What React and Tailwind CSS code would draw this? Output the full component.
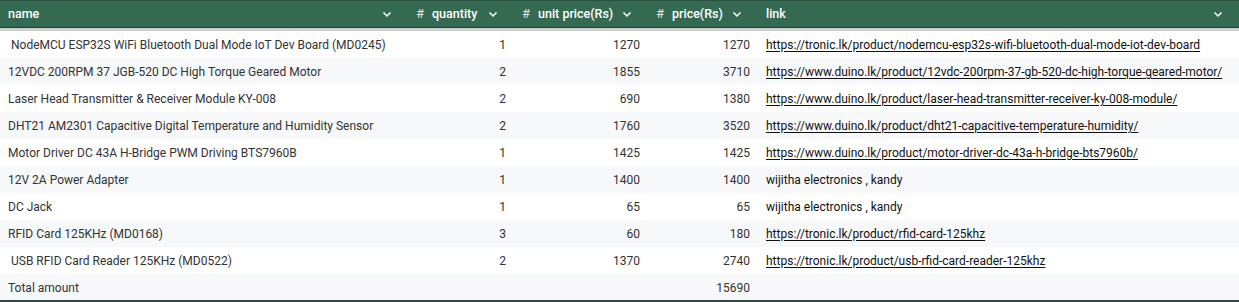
import React from 'react';

const rows = [
  { name: ' NodeMCU ESP32S WiFi Bluetooth Dual Mode IoT Dev Board (MD0245)', qty: 1, unit: 1270, price: 1270, link: 'https://tronic.lk/product/nodemcu-esp32s-wifi-bluetooth-dual-mode-iot-dev-board', url: true },
  { name: '12VDC 200RPM 37 JGB-520 DC High Torque Geared Motor', qty: 2, unit: 1855, price: 3710, link: 'https://www.duino.lk/product/12vdc-200rpm-37-gb-520-dc-high-torque-geared-motor/', url: true },
  { name: 'Laser Head Transmitter & Receiver Module KY-008', qty: 2, unit: 690, price: 1380, link: 'https://www.duino.lk/product/laser-head-transmitter-receiver-ky-008-module/', url: true },
  { name: 'DHT21 AM2301 Capacitive Digital Temperature and Humidity Sensor', qty: 2, unit: 1760, price: 3520, link: 'https://www.duino.lk/product/dht21-capacitive-temperature-humidity/', url: true },
  { name: 'Motor Driver DC 43A H-Bridge PWM Driving BTS7960B', qty: 1, unit: 1425, price: 1425, link: 'https://www.duino.lk/product/motor-driver-dc-43a-h-bridge-bts7960b/', url: true },
  { name: '12V 2A Power Adapter', qty: 1, unit: 1400, price: 1400, link: 'wijitha electronics , kandy', url: false },
  { name: 'DC Jack', qty: 1, unit: 65, price: 65, link: 'wijitha electronics , kandy', url: false },
  { name: 'RFID Card 125KHz (MD0168)', qty: 3, unit: 60, price: 180, link: 'https://tronic.lk/product/rfid-card-125khz', url: true },
  { name: ' USB RFID Card Reader 125KHz (MD0522)', qty: 2, unit: 1370, price: 2740, link: 'https://tronic.lk/product/usb-rfid-card-reader-125khz', url: true },
];

const grid = 'grid grid-cols-[408px_106px_134px_110px_1fr]';

function Chevron() {
  return (
    <svg width="10" height="10" viewBox="0 0 10 10" fill="none" stroke="white" strokeWidth="1.5" className="shrink-0">
      <path d="M1.5 3.5 L5 7 L8.5 3.5" />
    </svg>
  );
}

function HeadCell({ label, numeric }) {
  return (
    <div className="flex items-center px-2 gap-2">
      {numeric && <span className="text-[13px] font-normal text-[#dfe9e4]">#</span>}
      <span className="flex-1 whitespace-nowrap">{label}</span>
      <span className="pr-2"><Chevron /></span>
    </div>
  );
}

export default function App() {
  return (
    <div className="w-[1239px] h-[302px] overflow-hidden bg-white text-[12px] text-[#333] [font-family:Roboto,'Liberation_Sans',sans-serif]">
      <div className={`${grid} h-[28px] bg-[#356a52] text-white text-[12.5px] font-medium border-t border-[#2a5240] border-b border-b-[#1f3d30]`}>
        <HeadCell label="name" />
        <HeadCell label="quantity" numeric />
        <HeadCell label="unit price(Rs)" numeric />
        <HeadCell label="price(Rs)" numeric />
        <HeadCell label="link" />
      </div>
      <div className="h-[3px] bg-[#cdcdcd]" />
      {rows.map((r, i) => (
        <div key={i} className={`${grid} h-[27px] items-center ${i % 2 ? 'bg-[#f7f8fa]' : 'bg-white'}`}>
          <div className="px-2 whitespace-pre">{r.name}</div>
          <div className="px-2 text-right">{r.qty}</div>
          <div className="px-2 text-right">{r.unit}</div>
          <div className="px-2 text-right">{r.price}</div>
          <div className={`px-2 whitespace-nowrap text-[#111] ${r.url ? 'underline underline-offset-2' : ''}`}>{r.link}</div>
        </div>
      ))}
      <div className={`${grid} h-[28px] pt-px items-center bg-[#f7f8fa] border-b-2 border-[#2c4a42]`}>
        <div className="px-2">Total amount</div>
        <div />
        <div />
        <div className="px-2 text-right">15690</div>
        <div />
      </div>
    </div>
  );
}
